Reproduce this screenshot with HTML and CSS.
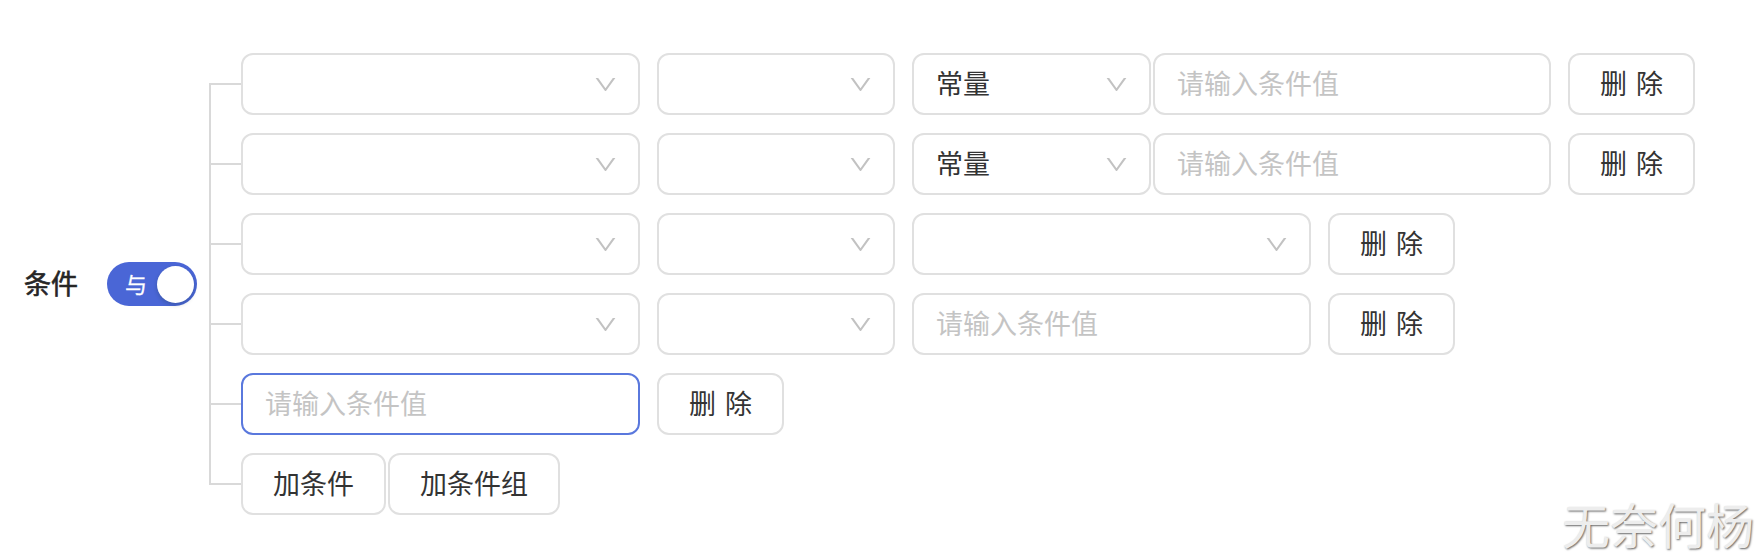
FILE: index.html
```html
<!DOCTYPE html>
<html lang="zh-CN">
<head>
<meta charset="utf-8">
<title>条件</title>
<link rel="stylesheet" href="styles.css">
</head>
<body>
<div class="page">
  <div class="cond">
    <div class="cond-label">条件</div>
    <div class="switch"><span class="switch-text">与</span><span class="switch-knob"></span></div>
    <div class="tree">
      <div class="row">
        <div class="select w-a"><span class="value"></span><svg class="arrow" viewBox="64 64 896 896"><path d="M884 256h-75c-5.1 0-9.9 2.5-12.9 6.6L512 654.2 227.9 262.6c-3-4.1-7.8-6.6-12.9-6.6h-75c-6.5 0-10.3 7.4-6.5 12.7l352.6 486.1c12.8 17.6 39 17.6 51.7 0l352.6-486.1c3.9-5.3.1-12.7-6.4-12.7z"/></svg></div>
        <div class="select w-b"><span class="value"></span><svg class="arrow" viewBox="64 64 896 896"><path d="M884 256h-75c-5.1 0-9.9 2.5-12.9 6.6L512 654.2 227.9 262.6c-3-4.1-7.8-6.6-12.9-6.6h-75c-6.5 0-10.3 7.4-6.5 12.7l352.6 486.1c12.8 17.6 39 17.6 51.7 0l352.6-486.1c3.9-5.3.1-12.7-6.4-12.7z"/></svg></div>
        <div class="compact">
          <div class="select w-c"><span class="value">常量</span><svg class="arrow" viewBox="64 64 896 896"><path d="M884 256h-75c-5.1 0-9.9 2.5-12.9 6.6L512 654.2 227.9 262.6c-3-4.1-7.8-6.6-12.9-6.6h-75c-6.5 0-10.3 7.4-6.5 12.7l352.6 486.1c12.8 17.6 39 17.6 51.7 0l352.6-486.1c3.9-5.3.1-12.7-6.4-12.7z"/></svg></div>
          <input class="input w-in" placeholder="请输入条件值">
        </div>
        <button class="btn btn-two">删除</button>
      </div>
      <div class="row">
        <div class="select w-a"><span class="value"></span><svg class="arrow" viewBox="64 64 896 896"><path d="M884 256h-75c-5.1 0-9.9 2.5-12.9 6.6L512 654.2 227.9 262.6c-3-4.1-7.8-6.6-12.9-6.6h-75c-6.5 0-10.3 7.4-6.5 12.7l352.6 486.1c12.8 17.6 39 17.6 51.7 0l352.6-486.1c3.9-5.3.1-12.7-6.4-12.7z"/></svg></div>
        <div class="select w-b"><span class="value"></span><svg class="arrow" viewBox="64 64 896 896"><path d="M884 256h-75c-5.1 0-9.9 2.5-12.9 6.6L512 654.2 227.9 262.6c-3-4.1-7.8-6.6-12.9-6.6h-75c-6.5 0-10.3 7.4-6.5 12.7l352.6 486.1c12.8 17.6 39 17.6 51.7 0l352.6-486.1c3.9-5.3.1-12.7-6.4-12.7z"/></svg></div>
        <div class="compact">
          <div class="select w-c"><span class="value">常量</span><svg class="arrow" viewBox="64 64 896 896"><path d="M884 256h-75c-5.1 0-9.9 2.5-12.9 6.6L512 654.2 227.9 262.6c-3-4.1-7.8-6.6-12.9-6.6h-75c-6.5 0-10.3 7.4-6.5 12.7l352.6 486.1c12.8 17.6 39 17.6 51.7 0l352.6-486.1c3.9-5.3.1-12.7-6.4-12.7z"/></svg></div>
          <input class="input w-in" placeholder="请输入条件值">
        </div>
        <button class="btn btn-two">删除</button>
      </div>
      <div class="row">
        <div class="select w-a"><span class="value"></span><svg class="arrow" viewBox="64 64 896 896"><path d="M884 256h-75c-5.1 0-9.9 2.5-12.9 6.6L512 654.2 227.9 262.6c-3-4.1-7.8-6.6-12.9-6.6h-75c-6.5 0-10.3 7.4-6.5 12.7l352.6 486.1c12.8 17.6 39 17.6 51.7 0l352.6-486.1c3.9-5.3.1-12.7-6.4-12.7z"/></svg></div>
        <div class="select w-b"><span class="value"></span><svg class="arrow" viewBox="64 64 896 896"><path d="M884 256h-75c-5.1 0-9.9 2.5-12.9 6.6L512 654.2 227.9 262.6c-3-4.1-7.8-6.6-12.9-6.6h-75c-6.5 0-10.3 7.4-6.5 12.7l352.6 486.1c12.8 17.6 39 17.6 51.7 0l352.6-486.1c3.9-5.3.1-12.7-6.4-12.7z"/></svg></div>
        <div class="select w-wide"><span class="value"></span><svg class="arrow" viewBox="64 64 896 896"><path d="M884 256h-75c-5.1 0-9.9 2.5-12.9 6.6L512 654.2 227.9 262.6c-3-4.1-7.8-6.6-12.9-6.6h-75c-6.5 0-10.3 7.4-6.5 12.7l352.6 486.1c12.8 17.6 39 17.6 51.7 0l352.6-486.1c3.9-5.3.1-12.7-6.4-12.7z"/></svg></div>
        <button class="btn btn-two">删除</button>
      </div>
      <div class="row">
        <div class="select w-a"><span class="value"></span><svg class="arrow" viewBox="64 64 896 896"><path d="M884 256h-75c-5.1 0-9.9 2.5-12.9 6.6L512 654.2 227.9 262.6c-3-4.1-7.8-6.6-12.9-6.6h-75c-6.5 0-10.3 7.4-6.5 12.7l352.6 486.1c12.8 17.6 39 17.6 51.7 0l352.6-486.1c3.9-5.3.1-12.7-6.4-12.7z"/></svg></div>
        <div class="select w-b"><span class="value"></span><svg class="arrow" viewBox="64 64 896 896"><path d="M884 256h-75c-5.1 0-9.9 2.5-12.9 6.6L512 654.2 227.9 262.6c-3-4.1-7.8-6.6-12.9-6.6h-75c-6.5 0-10.3 7.4-6.5 12.7l352.6 486.1c12.8 17.6 39 17.6 51.7 0l352.6-486.1c3.9-5.3.1-12.7-6.4-12.7z"/></svg></div>
        <input class="input w-wide" placeholder="请输入条件值">
        <button class="btn btn-two">删除</button>
      </div>
      <div class="row">
        <input class="input w-a focused" placeholder="请输入条件值">
        <button class="btn btn-two">删除</button>
      </div>
      <div class="row">
        <div class="compact">
          <button class="btn">加条件</button>
          <button class="btn">加条件组</button>
        </div>
      </div>
    </div>
  </div>
  <div class="watermark">无奈何杨</div>
</div>
</body>
</html>
```

FILE: styles.css
```css
html, body {
  margin: 0;
  padding: 0;
  background: #ffffff;
}

body {
  font-family: "Noto Sans CJK SC", "Noto Sans", "Liberation Sans", sans-serif;
  font-size: 27px;
  color: #333333;
}

.page {
  position: relative;
  width: 1764px;
  height: 556px;
  box-sizing: border-box;
  padding: 53px 0 0 24px;
}

.cond {
  display: flex;
  align-items: center;
}

.cond-label {
  width: 56px;
  font-size: 27px;
  font-weight: 400;
  -webkit-text-stroke: 0.6px #262626;
  color: #262626;
  line-height: 1;
  margin-right: 27px;
  padding-bottom: 4px;
}

.switch {
  position: relative;
  width: 90px;
  height: 44px;
  border-radius: 22px;
  background: #4a66d6;
  display: flex;
  align-items: center;
  box-sizing: border-box;
  padding-left: 18px;
  padding-bottom: 2px;
  margin-right: 12px;
}

.switch-text {
  color: #ffffff;
  font-size: 22px;
  -webkit-text-stroke: 0.3px #ffffff;
  line-height: 1;
}

.switch-knob {
  position: absolute;
  right: 3px;
  top: 3.5px;
  width: 37px;
  height: 37px;
  border-radius: 50%;
  background: #ffffff;
  box-shadow: 0 2px 4px rgba(0, 35, 11, 0.2);
}

.tree {
  position: relative;
  display: flex;
  flex-direction: column;
  gap: 18px;
  padding-left: 32px;
}

.tree::before {
  content: "";
  position: absolute;
  left: 0;
  top: 30px;
  bottom: 30px;
  width: 2px;
  background: #d9d9d9;
}

.row {
  position: relative;
  display: flex;
  align-items: center;
  gap: 17px;
  height: 62px;
}

.row::before {
  content: "";
  position: absolute;
  left: -32px;
  top: 30px;
  width: 32px;
  height: 2px;
  background: #d9d9d9;
}

.compact {
  display: flex;
  gap: 2px;
}

.select,
.input,
.btn {
  box-sizing: border-box;
  height: 62px;
  border: 2px solid #e0e0e0;
  border-radius: 12px;
  background: #ffffff;
  font-family: inherit;
  font-size: 27px;
}

.select {
  display: flex;
  align-items: center;
  justify-content: space-between;
  padding: 0 21px 0 22px;
  color: #333333;
}

.select .value {
  padding-bottom: 4px;
}

.arrow {
  width: 23px;
  height: 23px;
  fill: #c2c2c2;
  flex: none;
}

.input {
  padding: 0 22px 4px;
  color: #333333;
  outline: none;
}

.input::placeholder {
  color: #c4c4c4;
}

.input.focused {
  border-color: #5a78dd;
}

.w-a { width: 399px; }
.w-b { width: 238px; }
.w-c { width: 239px; }
.w-in { width: 398px; }
.w-wide { width: 399px; }

.btn {
  padding: 0 30px 4px;
  color: #333333;
  cursor: pointer;
  line-height: 1;
}

.btn-two {
  width: 127px;
  padding: 0 0 4px;
  letter-spacing: 0.34em;
  text-indent: 0.34em;
}

.watermark {
  position: absolute;
  right: 10px;
  bottom: 9px;
  font-size: 48px;
  line-height: 1;
  color: #ededed;
  text-shadow: 1px 1px 2px rgba(0, 0, 0, 0.6);
}
```
